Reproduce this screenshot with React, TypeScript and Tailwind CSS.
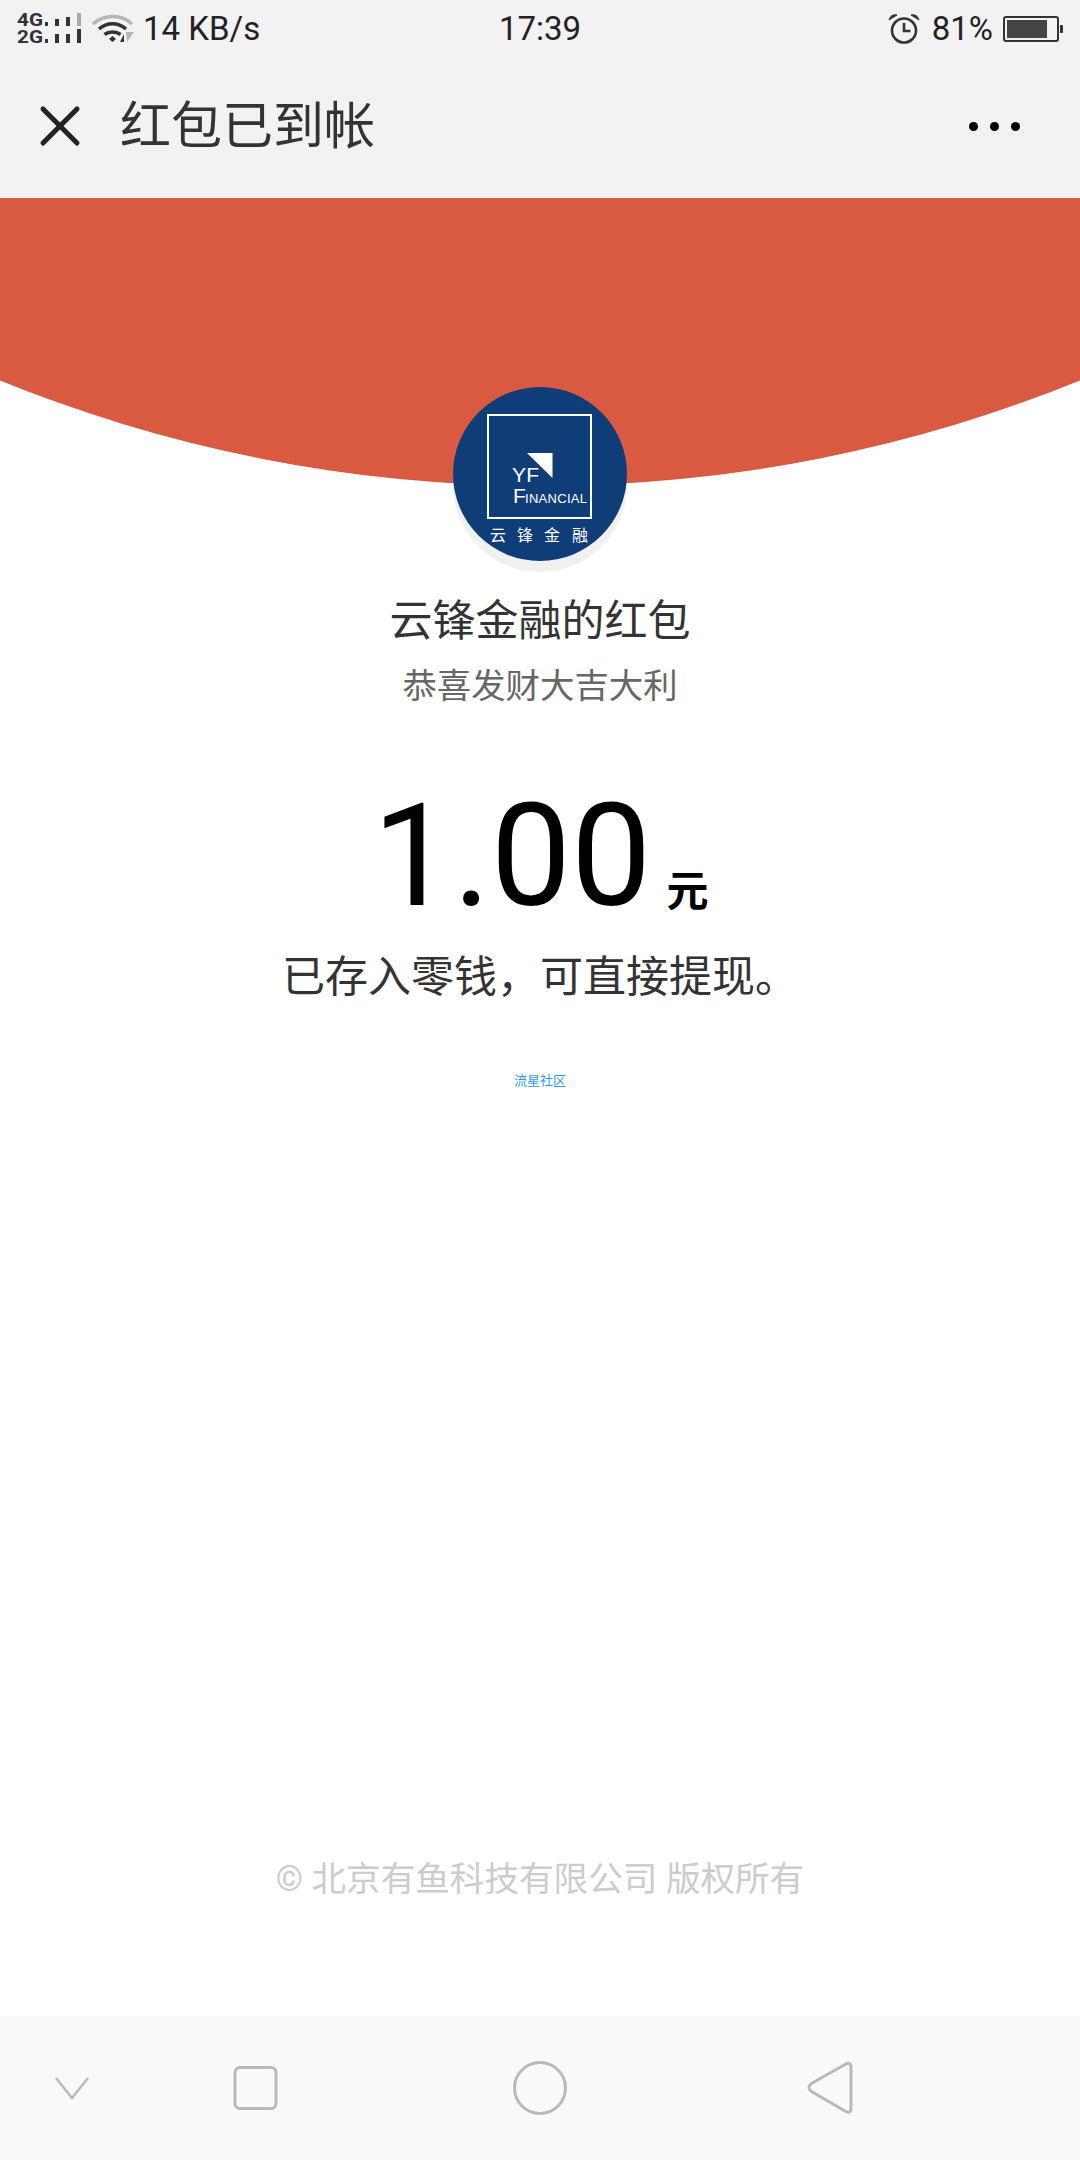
import { X } from 'lucide-react';

const FONT = "font-['Roboto','Noto_Sans_CJK_SC',sans-serif]";

const SignalIcon = () => (
  <svg width="72" height="44" viewBox="0 -4 72 44" className="shrink-0">
    <text x="0" y="15" fontSize="18" fontWeight="700" fill="#333" fontFamily="Roboto, sans-serif" textLength="26" lengthAdjust="spacingAndGlyphs">4G</text>
    <text x="0" y="32" fontSize="18" fontWeight="700" fill="#333" fontFamily="Roboto, sans-serif" textLength="26" lengthAdjust="spacingAndGlyphs">2G</text>
    <rect x="28" y="11" width="3" height="4" fill="#333" />
    <rect x="38" y="8" width="4" height="7" fill="#333" />
    <rect x="49" y="6" width="4" height="9" fill="#333" />
    <rect x="60" y="2" width="4" height="13" fill="#aaa" />
    <rect x="28" y="28" width="3" height="4" fill="#333" />
    <rect x="38" y="23" width="4" height="9" fill="#333" />
    <rect x="49" y="23" width="4" height="9" fill="#333" />
    <rect x="60" y="18" width="4" height="14" fill="#333" />
  </svg>
);

const WifiIcon = () => (
  <svg width="44" height="30" viewBox="0 0 44 30" className="shrink-0">
    <path d="M1 10 C12 0 30 0 40 10" fill="none" stroke="#b5b5b5" strokeWidth="3.5" />
    <path d="M7 15 C15 8 26 8 34 15" fill="none" stroke="#333" strokeWidth="3.5" />
    <path d="M12.5 20.5 C17 17 24 17 28.5 20.5" fill="none" stroke="#333" strokeWidth="3.5" />
    <path d="M17 25 L20.5 22 L24 25 L20.5 28 Z" fill="#333" />
    <path d="M32 20 L32 28 L28 28 Z" fill="#333" />
    <path d="M34 18 L42 18 L35 28 Z" fill="#b5b5b5" />
  </svg>
);

const AlarmIcon = () => (
  <svg width="32" height="30" viewBox="0 0 32 30" fill="none" className="shrink-0">
    <circle cx="16" cy="16.5" r="12" stroke="#333" strokeWidth="2.6" />
    <path d="M16 9 V17 H22.5" stroke="#333" strokeWidth="2.6" />
    <path d="M1 6 C2 2 5 0 9 1 Z M31 6 C30 2 27 0 23 1 Z" fill="#333" stroke="#333" strokeWidth="1" />
  </svg>
);

const BatteryIcon = () => (
  <div className="flex items-center shrink-0">
    <div className="w-[56px] h-[26px] rounded-[3px] border-2 border-[#333] p-[2px]">
      <div className="w-[40px] h-full bg-[#444]" />
    </div>
    <div className="w-[3px] h-[8px] ml-[1px] bg-[#333] rounded-r-[1px]" />
  </div>
);

const YfLogo = () => (
  <svg width="174" height="174" viewBox="0 0 174 174" className="block">
    <circle cx="87" cy="87" r="87" fill="#0f3d78" />
    <rect x="35" y="28" width="103" height="103" fill="none" stroke="#fff" strokeWidth="2" />
    <path d="M74 66 H99.5 V91 Z" fill="#fff" />
    <text x="59" y="95" fontSize="21" fill="#fff" fontFamily="Liberation Sans, sans-serif" textLength="27">YF</text>
    <text x="60" y="116" fontSize="21" fill="#fff" fontFamily="Liberation Sans, sans-serif">F</text>
    <text x="72" y="116" fontSize="13" fill="#fff" fontFamily="Liberation Sans, sans-serif" textLength="62">INANCIAL</text>
    <text x="37" y="154" fontSize="16" fill="#fff" fontFamily="Noto Sans CJK SC, sans-serif">云</text>
    <text x="64" y="154" fontSize="16" fill="#fff" fontFamily="Noto Sans CJK SC, sans-serif">锋</text>
    <text x="91" y="154" fontSize="16" fill="#fff" fontFamily="Noto Sans CJK SC, sans-serif">金</text>
    <text x="119" y="154" fontSize="16" fill="#fff" fontFamily="Noto Sans CJK SC, sans-serif">融</text>
  </svg>
);

const App = () => {
  return (
    <div className={`${FONT} w-[1080px] h-[2160px] flex flex-col bg-white overflow-hidden`}>
      {/* status bar + title */}
      <div className="h-[198px] shrink-0 bg-[#f2f2f2] flex flex-col">
        <div className="h-[56px] flex items-center justify-between pl-[17px] pr-[17px] pt-[1px] text-[33px] text-[#222]">
          <div className="w-[300px] flex items-center">
            <SignalIcon />
            <div className="ml-[3px]"><WifiIcon /></div>
            <span className="ml-[7px] leading-none">14 KB/s</span>
          </div>
          <span className="leading-none">17:39</span>
          <div className="w-[300px] flex items-center justify-end">
            <AlarmIcon />
            <span className="ml-[12px] leading-none">81%</span>
            <div className="ml-[10px]"><BatteryIcon /></div>
          </div>
        </div>
        <div className="flex-1 flex items-center pl-[32px] pr-[60px] pb-[2px]">
          <X size={68} strokeWidth={1.75} className="text-[#222] shrink-0 -ml-[6px]" />
          <h1 className="ml-[26px] text-[51px] leading-none font-normal text-[#333]">红包已到帐</h1>
          <div className="ml-auto flex gap-[12px]">
            <div className="w-[9px] h-[9px] rounded-full bg-black" />
            <div className="w-[9px] h-[9px] rounded-full bg-black" />
            <div className="w-[9px] h-[9px] rounded-full bg-black" />
          </div>
        </div>
      </div>

      {/* red curved banner */}
      <div className="h-[288px] shrink-0 flex justify-center items-end overflow-hidden">
        <div className="w-[2870px] h-[2870px] shrink-0 rounded-full bg-[#d95a40]" />
      </div>

      {/* main content */}
      <div className="flex-1 flex flex-col items-center">
        <div className="-mt-[99px] relative rounded-full shadow-[0_11px_0_#f0f0f0]">
          <YfLogo />
        </div>
        <div className="mt-[32px] text-[43px] leading-[56px] text-[#333]">云锋金融的红包</div>
        <div className="mt-[13px] text-[34.4px] leading-[48px] text-[#666]">恭喜发财大吉大利</div>
        <div className="mt-[81px] h-[130px] flex items-end text-black">
          <span className="text-[143px] leading-[130px] ml-[1px]">1.00</span>
          <span className="ml-[15px] mb-[4px] text-[42px] leading-[50px] font-bold">元</span>
        </div>
        <div className="mt-[26px] text-[43px] leading-[60px] text-[#333]">已存入零钱，可直接提现。</div>
        <div className="mt-[64px] text-[13px] leading-[20px] text-[#2d9cf5]">流星社区</div>
        <div className="mt-auto mb-[115px] text-[34.6px] leading-[44px] text-[#ccc]">© 北京有鱼科技有限公司 版权所有</div>
      </div>

      {/* android nav bar */}
      <div className="h-[144px] shrink-0 bg-[#f9f9f9] relative flex items-center">
        <svg width="1080" height="144" viewBox="0 0 1080 144" fill="none" stroke="#b9b9b9" strokeWidth="3" className="block">
          <path d="M56 62 L72 82 L88 62" strokeWidth="2.5" />
          <rect x="235" y="51.5" width="41" height="41" rx="5" />
          <circle cx="540" cy="72" r="25.5" />
          <path d="M851 52 Q851 45 845 48.5 L814 66 Q804 71.5 814 77 L845 95 Q851 98.5 851 92 Z" />
        </svg>
      </div>
    </div>
  );
};

export default App;
